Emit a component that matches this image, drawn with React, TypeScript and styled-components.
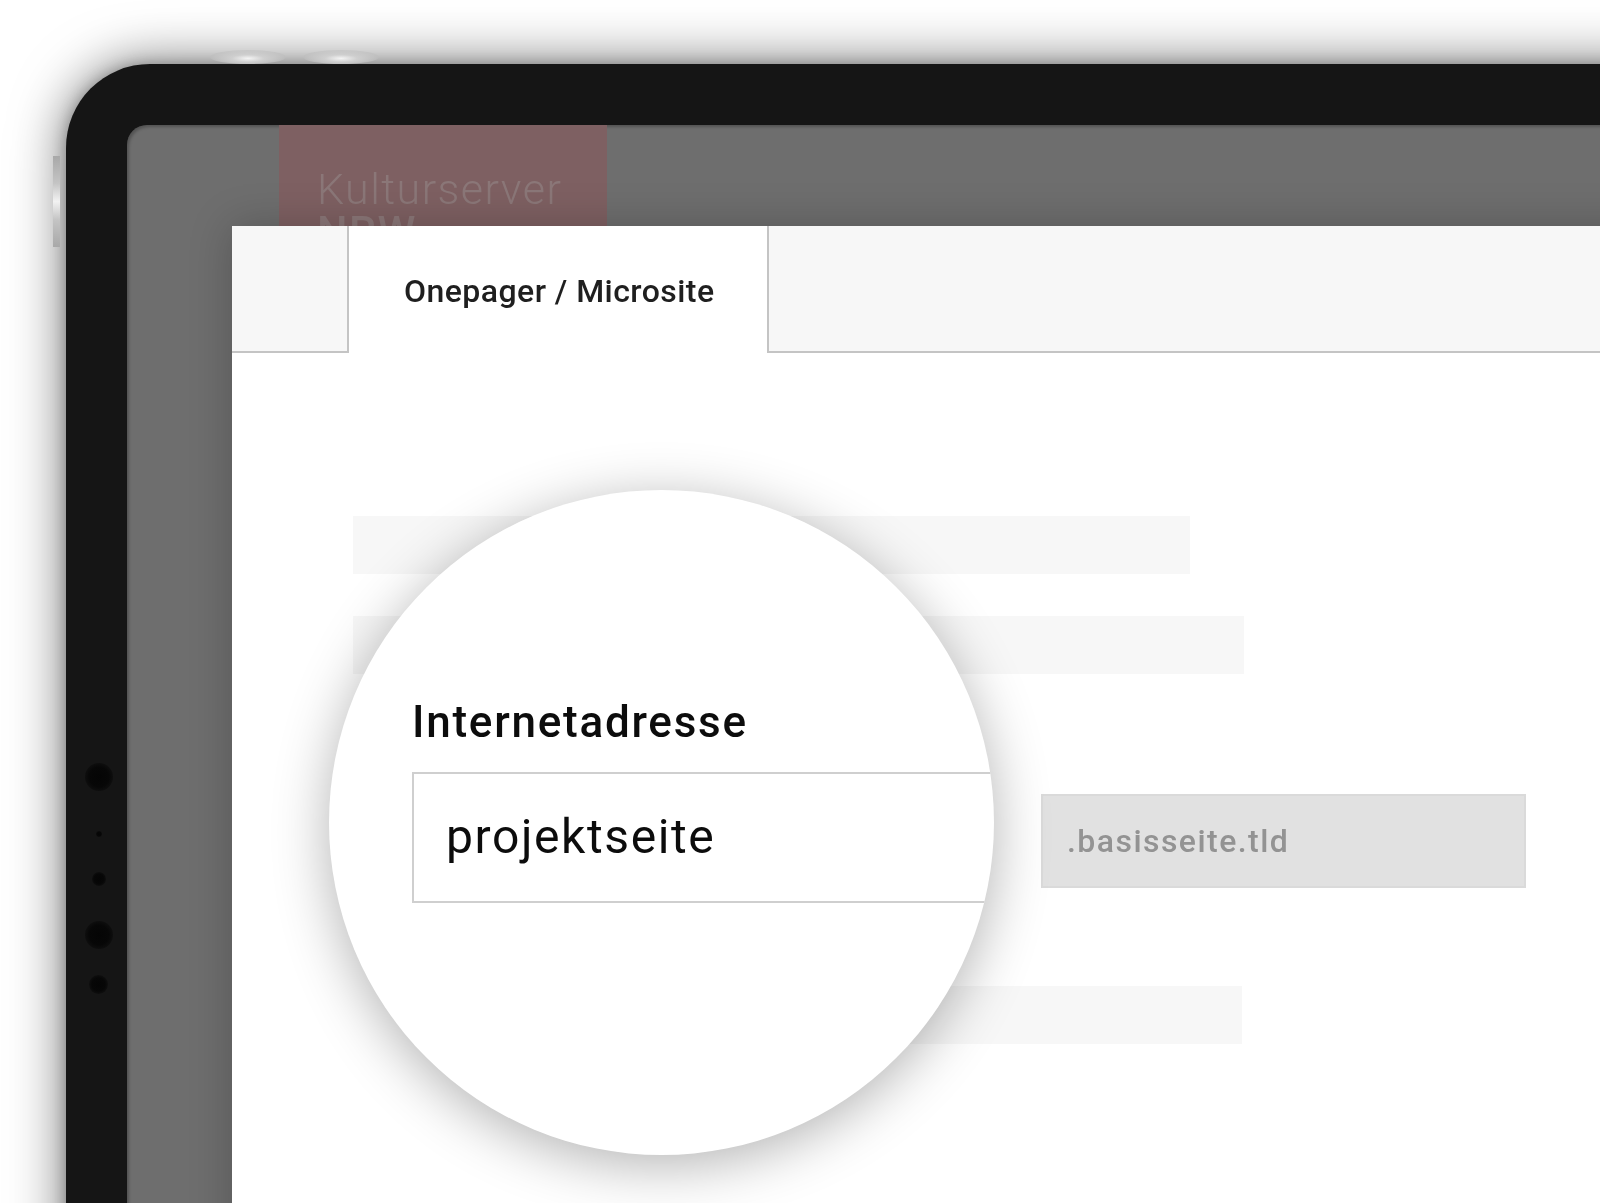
import React from "react";
import styled, { createGlobalStyle } from "styled-components";

const Global = createGlobalStyle`
  html, body { margin: 0; padding: 0; background: #fff; }
  body { font-family: Roboto, "Liberation Sans", sans-serif; }
`;

const Page = styled.div`
  width: 1600px;
  height: 1203px;
  overflow: hidden;
  position: relative;
  background: #fff;
  padding: 64px 0 0 66px;
  box-sizing: border-box;
  filter: blur(0.7px);
`;

const Device = styled.div`
  position: relative;
  width: 1700px;
  height: 1300px;
  box-sizing: border-box;
  padding: 61px 0 0 61px;
  background: #151515;
  border-radius: 84px;
  box-shadow: 0 0 54px rgba(0, 0, 0, 0.58), 0 0 14px rgba(0, 0, 0, 0.25);
`;

const TopButton = styled.div<{ $left: number }>`
  position: absolute;
  top: -14px;
  left: ${(p) => p.$left}px;
  width: 76px;
  height: 14px;
  border-radius: 50%;
  background: radial-gradient(ellipse at center 60%, #f4f4f4 0%, #cfcfcf 30%, rgba(190, 190, 190, 0.5) 70%, transparent 100%);
`;

const SideButton = styled.div`
  position: absolute;
  left: -13px;
  top: 92px;
  width: 7px;
  height: 91px;
  background: linear-gradient(180deg, #a8a8a8 0%, #c4c4c4 30%, #f2f2f2 50%, #c4c4c4 70%, #a8a8a8 100%);
`;

const SensorColumn = styled.div`
  position: absolute;
  left: 0;
  top: 699px;
  width: 65px;
  display: flex;
  flex-direction: column;
  align-items: center;
`;

const Sensor = styled.div<{ $size: number; $gap: number; $blue?: boolean }>`
  width: ${(p) => p.$size}px;
  height: ${(p) => p.$size}px;
  margin-top: ${(p) => p.$gap}px;
  border-radius: 50%;
  background: ${(p) =>
    p.$blue
      ? "radial-gradient(circle closest-side, #2f5da3 0%, #2f5da3 50%, #070707 66%, #0a0a0a 100%)"
      : "radial-gradient(circle closest-side, #050505 0%, #070707 70%, #0e0e0e 100%)"};
`;

const Screen = styled.div`
  height: 100%;
  background: #6e6e6e;
  border-radius: 20px 0 0 0;
  box-shadow: inset 2px 2px 3px rgba(0, 0, 0, 0.25);
  overflow: hidden;
  display: flex;
  flex-direction: column;
`;

const Header = styled.div`
  height: 101px;
  flex: none;
  padding-left: 152px;
`;

const Logo = styled.div`
  width: 328px;
  height: 101px;
  box-sizing: border-box;
  padding: 43px 0 0 38px;
  background: #7e6062;
  color: #8b7778;
  font-weight: 300;
  font-size: 43px;
  line-height: 42px;
  letter-spacing: 1.45px;
  overflow: hidden;
`;

const LogoStrong = styled.span`
  display: block;
  font-weight: 500;
`;

const Panel = styled.div`
  margin-left: 105px;
  flex: 1;
  background: #fff;
  box-shadow: 0 0 40px rgba(0, 0, 0, 0.22);
  position: relative;
`;

const Tabs = styled.div`
  display: flex;
  height: 127px;
  box-sizing: border-box;
`;

const TabSpacer = styled.div<{ $grow?: boolean; $w?: number }>`
  background: #f7f7f7;
  border-bottom: 2px solid #c4c4c4;
  flex: ${(p) => (p.$grow ? 1 : "none")};
  width: ${(p) => (p.$w ? `${p.$w}px` : "auto")};
`;

const ActiveTab = styled.div`
  width: 422px;
  box-sizing: border-box;
  flex: none;
  background: #fff;
  border-left: 2px solid #c4c4c4;
  border-right: 2px solid #c4c4c4;
  padding: 2px 0 0 55px;
  display: flex;
  align-items: center;
  font-size: 32px;
  font-weight: 500;
  letter-spacing: 0.45px;
  color: #1f1f1f;
`;

const Body = styled.div`
  padding: 163px 0 0 121px;
  display: flex;
  flex-direction: column;
  align-items: flex-start;
`;

const Placeholder = styled.div<{ $w: number; $mt: number; $ml?: number }>`
  width: ${(p) => p.$w}px;
  height: 58px;
  margin-top: ${(p) => p.$mt}px;
  margin-left: ${(p) => p.$ml ?? 0}px;
  background: #f7f7f7;
`;

const SuffixRow = styled.div`
  margin: 120px 0 0 688px;
`;

const Suffix = styled.div`
  width: 485px;
  height: 94px;
  box-sizing: border-box;
  background: #e1e1e1;
  border: 2px solid #dadada;
  padding-left: 24px;
  display: flex;
  align-items: center;
  color: #939393;
  font-size: 32px;
  font-weight: 500;
  letter-spacing: 1.45px;
`;

const Lens = styled.div`
  position: absolute;
  left: 97px;
  top: 264px;
  width: 665px;
  height: 665px;
  border-radius: 50%;
  background: #fff;
  box-shadow: 0 10px 56px rgba(0, 0, 0, 0.3);
  overflow: hidden;
  padding: 207px 0 0 83px;
  box-sizing: border-box;
`;

const Label = styled.div`
  font-size: 44px;
  line-height: 50px;
  font-weight: 500;
  letter-spacing: 1.75px;
  color: #0c0c0c;
`;

const Field = styled.div`
  margin-top: 25px;
  width: 700px;
  height: 131px;
  box-sizing: border-box;
  border: 2px solid #cfcfcf;
  padding: 0 0 3px 32px;
  display: flex;
  align-items: center;
  font-size: 48px;
  color: #0c0c0c;
  letter-spacing: 1.6px;
`;

export default function App() {
  return (
    <>
      <Global />
      <Page>
        <Device>
          <TopButton $left={144} />
          <TopButton $left={237} />
          <SideButton />
          <SensorColumn>
            <Sensor $size={28} $gap={0} />
            <Sensor $size={6} $gap={40} />
            <Sensor $size={14} $gap={35} />
            <Sensor $size={28} $gap={35} />
            <Sensor $size={19} $gap={26} />
          </SensorColumn>
          <Screen>
            <Header>
              <Logo>
                Kulturserver
                <LogoStrong>NRW</LogoStrong>
              </Logo>
            </Header>
            <Panel>
              <Tabs>
                <TabSpacer $w={115} />
                <ActiveTab>Onepager / Microsite</ActiveTab>
                <TabSpacer $grow />
              </Tabs>
              <Body>
                <Placeholder $w={837} $mt={0} />
                <Placeholder $w={891} $mt={42} />
                <SuffixRow>
                  <Suffix>.basisseite.tld</Suffix>
                </SuffixRow>
                <Placeholder $w={689} $ml={200} $mt={98} />
              </Body>
              <Lens>
                <Label>Internetadresse</Label>
                <Field>projektseite</Field>
              </Lens>
            </Panel>
          </Screen>
        </Device>
      </Page>
    </>
  );
}
